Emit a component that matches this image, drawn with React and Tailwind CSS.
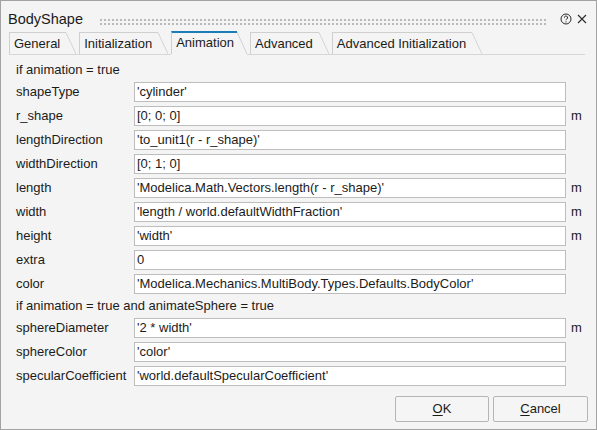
const rowsA = [
  { label: "shapeType", value: "'cylinder'" },
  { label: "r_shape", value: "[0; 0; 0]", unit: "m" },
  { label: "lengthDirection", value: "'to_unit1(r - r_shape)'" },
  { label: "widthDirection", value: "[0; 1; 0]" },
  { label: "length", value: "'Modelica.Math.Vectors.length(r - r_shape)'", unit: "m" },
  { label: "width", value: "'length / world.defaultWidthFraction'", unit: "m" },
  { label: "height", value: "'width'", unit: "m" },
  { label: "extra", value: "0" },
  { label: "color", value: "'Modelica.Mechanics.MultiBody.Types.Defaults.BodyColor'" },
];

const rowsB = [
  { label: "sphereDiameter", value: "'2 * width'", unit: "m" },
  { label: "sphereColor", value: "'color'" },
  { label: "specularCoefficient", value: "'world.defaultSpecularCoefficient'" },
];

const tabs = ["General", "Initialization", "Animation", "Advanced", "Advanced Initialization"];

function Tab({ label, active }) {
  if (active) {
    return (
      <div className="relative -mb-px flex h-[24px] items-stretch bg-[#f4f4f4] pb-px">
        <div className="flex items-center border-l border-t-2 border-l-[#cfcfcf] border-t-[#1a7db5] pl-[4px] pr-[3px] pb-[1px]">
          {label}
        </div>
        <svg width="10" height="23" className="shrink-0">
          <line x1="0" y1="1" x2="10" y2="23" stroke="#cfcfcf" strokeWidth="1" />
        </svg>
      </div>
    );
  }
  return (
    <div className="flex h-[22px] items-stretch">
      <div className="flex items-center border-l border-t border-[#cfcfcf] pl-[4px] pr-[6px]">
        {label}
      </div>
      <svg width="10" height="22" className="shrink-0">
        <line x1="0" y1="0.5" x2="10" y2="22" stroke="#d4d4d4" strokeWidth="1" />
      </svg>
    </div>
  );
}

function Field({ label, value, unit }) {
  return (
    <>
      <div className="flex h-[20px] items-center">{label}</div>
      <div className="h-[20px] border border-[#bdbdbd] bg-white pl-[2px] leading-[18px] whitespace-nowrap overflow-hidden">
        {value}
      </div>
      <div className="flex h-[20px] items-center pl-[5px]">{unit}</div>
    </>
  );
}

export default function App() {
  return (
    <div
      className="flex h-[430px] w-[597px] flex-col border border-[#a3a3a3] bg-[#f4f4f4] text-[13px] text-[#1b1b1b]"
      style={{ fontFamily: '"Liberation Sans", Arial, sans-serif' }}
    >
      {/* title bar */}
      <div className="flex h-[30px] shrink-0 items-start pl-[7px] pr-[9px]">
        <span className="mt-[10px] text-[14.5px] leading-[17px]">BodyShape</span>
        <svg className="mt-[18px] ml-[17px] mr-[12px] h-[6px] flex-1">
          <defs>
            <pattern id="grip" width="4" height="4" patternUnits="userSpaceOnUse">
              <rect x="0" y="0" width="2" height="2" fill="#b9b9b9" />
            </pattern>
          </defs>
          <rect x="0" y="0" width="100%" height="6" fill="url(#grip)" />
        </svg>
        <svg width="12" height="12" viewBox="0 0 12 12" className="mt-[12px]">
          <circle cx="6" cy="6" r="5" fill="none" stroke="#2b2b2b" strokeWidth="1" />
          <path d="M4.4 4.7a1.6 1.6 0 1 1 2.4 1.3c-.5.3-.8.6-.8 1.2" fill="none" stroke="#2b2b2b" strokeWidth="1" />
          <circle cx="6" cy="8.9" r="0.6" fill="#2b2b2b" />
        </svg>
        <svg width="10" height="10" viewBox="0 0 10 10" className="mt-[13px] ml-[5px]">
          <path d="M1 1L9 9M9 1L1 9" stroke="#2b2b2b" strokeWidth="1.1" />
        </svg>
      </div>

      {/* tabs */}
      <div className="ml-[8px] mr-[11px] flex shrink-0 items-end gap-[3px] border-b border-[#d6d6d6]">
        {tabs.map((t) => (
          <Tab key={t} label={t} active={t === "Animation"} />
        ))}
      </div>

      {/* body */}
      <div className="flex flex-1 flex-col pl-[15px] pt-[7px] pr-[8px] pb-[7px]">
        <div className="grid grid-cols-[118px_432px_auto] gap-y-[4px]">
          <div className="col-span-3 flex h-[16px] items-center">if animation = true</div>
          {rowsA.map((r) => (
            <Field key={r.label} {...r} />
          ))}
          <div className="col-span-3 flex h-[16px] items-center">
            if animation = true and animateSphere = true
          </div>
          {rowsB.map((r) => (
            <Field key={r.label} {...r} />
          ))}
        </div>

        <div className="mt-auto flex justify-end gap-[4px]">
          <button className="h-[26px] w-[94px] rounded-[2px] border border-[#b5b5b5] bg-[#f5f5f5]">
            <span className="underline underline-offset-2">O</span>K
          </button>
          <button className="h-[26px] w-[95px] rounded-[2px] border border-[#b5b5b5] bg-[#f5f5f5]">
            <span className="underline underline-offset-2">C</span>ancel
          </button>
        </div>
      </div>
    </div>
  );
}
